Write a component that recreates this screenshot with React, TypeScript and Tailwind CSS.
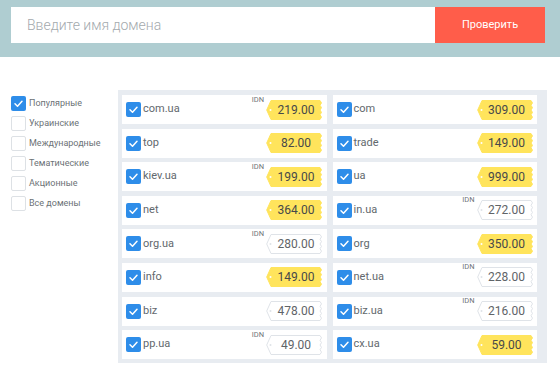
import React from "react";

type Item = { name: string; price: string; idn?: boolean; hot?: boolean };

const left: Item[] = [
  { name: "com.ua", price: "219.00", idn: true, hot: true },
  { name: "top", price: "82.00", hot: true },
  { name: "kiev.ua", price: "199.00", idn: true, hot: true },
  { name: "net", price: "364.00", hot: true },
  { name: "org.ua", price: "280.00", idn: true },
  { name: "info", price: "149.00", hot: true },
  { name: "biz", price: "478.00" },
  { name: "pp.ua", price: "49.00", idn: true },
];
const right: Item[] = [
  { name: "com", price: "309.00", hot: true },
  { name: "trade", price: "149.00", hot: true },
  { name: "ua", price: "999.00", hot: true },
  { name: "in.ua", price: "272.00", idn: true },
  { name: "org", price: "350.00", hot: true },
  { name: "net.ua", price: "228.00", idn: true },
  { name: "biz.ua", price: "216.00", idn: true },
  { name: "cx.ua", price: "59.00", hot: true },
];

const items: Item[] = [];
left.forEach((l, i) => {
  items.push(l);
  items.push(right[i]);
});

const filters = [
  { label: "Популярные", checked: true },
  { label: "Украинские" },
  { label: "Международные" },
  { label: "Тематические" },
  { label: "Акционные" },
  { label: "Все домены" },
];

function tagPath(w: number, h: number) {
  let d = `M5 0.5 L${w - 2} 0.5`;
  const teeth = 8;
  const step = (h - 1) / teeth;
  for (let i = 1; i <= teeth; i++) {
    const y = 0.5 + i * step;
    const x = i % 2 === 1 ? w - 0.5 : w - 2;
    d += ` L${x} ${y.toFixed(2)}`;
  }
  d += ` L5 ${h - 0.5} L0.7 ${h / 2} Z`;
  return d;
}

function Check({ size = 15 }: { size?: number }) {
  return (
    <svg width={size} height={size} viewBox="0 0 15 15" className="shrink-0">
      <rect x="0" y="0" width="15" height="15" rx="2" fill="#2e8de9" />
      <polyline
        points="4,7.8 6.5,10.2 11,5.2"
        fill="none"
        stroke="#ffffff"
        strokeWidth="1.5"
        strokeLinecap="round"
        strokeLinejoin="round"
      />
    </svg>
  );
}

function Tag({ price, hot }: { price: string; hot?: boolean }) {
  const w = 56;
  const h = 20;
  return (
    <div className="relative w-[56px] h-[20px] shrink-0">
      <svg width={w} height={h} viewBox={`0 0 ${w} ${h}`} className="absolute inset-0">
        <path
          d={tagPath(w, h)}
          fill={hot ? "#ffe45c" : "#ffffff"}
          stroke={hot ? "#ffe45c" : "#dfe3e8"}
          strokeWidth="1"
        />
        <circle cx="4.5" cy={h / 2} r="1" fill={hot ? "#ffffff" : "#dfe3e8"} />
      </svg>
      <div
        className={`relative flex h-full items-center justify-center pl-[6px] pr-[2px] text-[12px] leading-none ${
          hot ? "text-[#47494a]" : "text-[#5f6468]"
        }`}
      >
        {price}
      </div>
    </div>
  );
}

function Card({ item }: { item: Item }) {
  return (
    <div className="flex h-[29px] items-center bg-white pl-[4px] pr-[4.5px]">
      <Check />
      <span className="ml-[2px] text-[11px] text-[#62686d]">{item.name}</span>
      <div className="ml-auto flex items-center">
        {item.idn && (
          <span className="mr-[2px] self-start -mt-[4px] text-[7.5px] leading-none text-[#707478]">IDN</span>
        )}
        <Tag price={item.price} hot={item.hot} />
      </div>
    </div>
  );
}

export default function App() {
  return (
    <div className="w-[560px] h-[372px] bg-white overflow-hidden" style={{ fontFamily: "Roboto, 'Noto Sans', sans-serif" }}>
      <div className="h-[57px] bg-[#afcdd1] pt-[7px] pl-[11px] pr-[15px]">
        <div className="flex h-[36px]">
          <div className="flex flex-1 items-center bg-white pl-[16px] text-[14px] font-light text-[#a3a9ad]">
            Введите имя домена
          </div>
          <button className="w-[110px] bg-[#ff5d4a] text-[11px] text-white">Проверить</button>
        </div>
      </div>
      <div className="flex pl-[11px] pt-[33px]">
        <div className="w-[107px] pt-[6px] flex flex-col gap-[5.5px]">
          {filters.map((f) => (
            <div key={f.label} className="flex items-center h-[14.5px]">
              {f.checked ? (
                <Check size={15} />
              ) : (
                <div className="h-[15px] w-[15px] rounded-[2px] border border-[#dde1e5] bg-white shrink-0" />
              )}
              <span className="ml-[3px] text-[9px] text-[#6c7276]">{f.label}</span>
            </div>
          ))}
        </div>
        <div className="w-[429px] bg-[#e8ecf1] pl-[4px] pr-[10px] pt-[5px] pb-[4px] grid grid-cols-2 gap-x-[6px] gap-y-[4.6px]">
          {items.map((it, i) => (
            <Card key={i} item={it} />
          ))}
        </div>
      </div>
    </div>
  );
}
